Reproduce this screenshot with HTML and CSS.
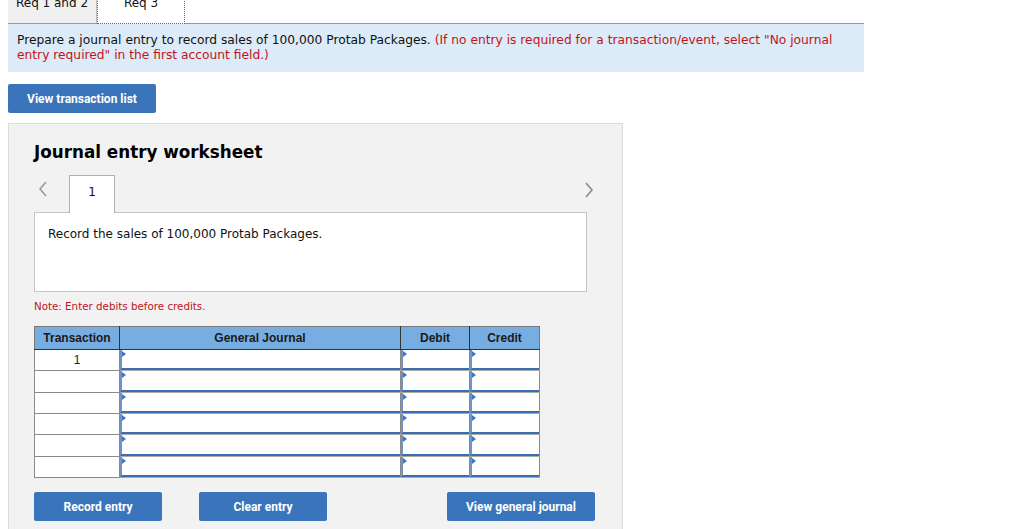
FILE: index.html
```html
<!DOCTYPE html>
<html>
<head>
<meta charset="utf-8">
<link rel="stylesheet" href="styles.css">
</head>
<body>
<div class="page">
  <div class="tabs">
    <div class="tab tab-off">Req 1 and 2</div>
    <div class="tab tab-on">Req 3</div>
  </div>
  <div class="info">Prepare a journal entry to record sales of 100,000 Protab Packages. <span class="red">(If no entry is required for a transaction/event, select "No journal entry required" in the first account field.)</span></div>
  <button class="btn btn-list">View transaction list</button>
  <div class="panel">
    <h2 class="title">Journal entry worksheet</h2>
    <div class="nav">
      <span class="arrow arrow-left">
        <svg width="10" height="16" viewBox="0 0 10 16"><path d="M8 1 L2 8 L8 15" fill="none" stroke="#9a9a9a" stroke-width="1.6"/></svg>
      </span>
      <div class="numtab">1</div>
      <span class="spacer"></span>
      <span class="arrow arrow-right">
        <svg width="10" height="16" viewBox="0 0 10 16"><path d="M2 1 L8 8 L2 15" fill="none" stroke="#8a8a8a" stroke-width="1.6"/></svg>
      </span>
    </div>
    <div class="desc">Record the sales of 100,000 Protab Packages.</div>
    <div class="note">Note: Enter debits before credits.</div>
    <table class="journal">
      <thead>
        <tr><th class="c-tr">Transaction</th><th class="c-gj">General Journal</th><th class="c-dr">Debit</th><th class="c-cr">Credit</th></tr>
      </thead>
      <tbody>
        <tr><td class="tr">1</td><td class="in"><div class="box"></div></td><td class="in"><div class="box"></div></td><td class="in"><div class="box"></div></td></tr>
        <tr class="tall"><td class="tr"></td><td class="in"><div class="box"></div></td><td class="in"><div class="box"></div></td><td class="in"><div class="box"></div></td></tr>
        <tr><td class="tr"></td><td class="in"><div class="box"></div></td><td class="in"><div class="box"></div></td><td class="in"><div class="box"></div></td></tr>
        <tr><td class="tr"></td><td class="in"><div class="box"></div></td><td class="in"><div class="box"></div></td><td class="in"><div class="box"></div></td></tr>
        <tr class="tall"><td class="tr"></td><td class="in"><div class="box"></div></td><td class="in"><div class="box"></div></td><td class="in"><div class="box"></div></td></tr>
        <tr><td class="tr"></td><td class="in"><div class="box"></div></td><td class="in"><div class="box"></div></td><td class="in"><div class="box"></div></td></tr>
      </tbody>
    </table>
    <div class="actions">
      <button class="btn btn-rec">Record entry</button>
      <button class="btn btn-clr">Clear entry</button>
      <span class="spacer"></span>
      <button class="btn btn-view">View general journal</button>
    </div>
  </div>
</div>
</body>
</html>
```
FILE: styles.css
```css
html, body { margin: 0; padding: 0; background: #fff; }
body { font-family: "DejaVu Sans", Verdana, sans-serif; color: #111; overflow: hidden; }
.page { padding-left: 8px; width: 856px; }

.tabs { display: flex; margin-top: -14px; height: 37px; border-bottom: 1px solid #9a9a9a; }
.tab { height: 37px; box-sizing: border-box; font-size: 12px; text-align: center; padding-top: 10px; }
.tab-off { background: #f0f0f0; border-right: 1px solid #bbb; width: 89px; }
.tab-on { background: #fff; border: 1px dotted #2f6fc6; border-top: none; width: 88px; height: 38px; margin-bottom: -1px; }

.info { background: #dcebf7; font-size: 12.25px; line-height: 15px; padding: 9px 9px 9px 9px; }
.red { color: #c0141b; }

.btn { border: none; background: #3a75bb; color: #fff; font-family: Roboto, "Liberation Sans", sans-serif; font-weight: bold; font-size: 12px; border-radius: 2px; height: 29px; padding: 0; cursor: pointer; }
.btn-list { width: 148px; margin-top: 12px; display: block; }

.panel { margin-top: 10px; width: 615px; box-sizing: border-box; background: #f2f2f2; border: 1px solid #dcdcdc; border-bottom: none; padding: 16px 0 8px 25px; height: 420px; }
.title { margin: 0; font-size: 16.8px; font-weight: bold; line-height: 24px; color: #000; }

.nav { display: flex; align-items: flex-start; margin-top: 11px; width: 560px; height: 37px; }
.arrow { display: block; height: 16px; }
.arrow-left { margin: 6px 0 0 4px; width: 10px; }
.arrow-right { margin: 7px 0 0 0; width: 10px; }
.spacer { flex: 1; }
.numtab { margin-left: 21px; width: 46px; height: 38px; box-sizing: border-box; background: #fff; border: 1px solid #b0b0b0; border-bottom: none; text-align: center; font-size: 12px; padding-top: 9px; position: relative; z-index: 1; }

.desc { width: 553px; height: 80px; box-sizing: border-box; background: #fff; border: 1px solid #c4c4c4; font-size: 12px; padding: 14px 13px; }
.note { color: #c0141b; font-size: 10.3px; margin-top: 7px; line-height: 14px; }

.journal { margin-top: 13px; border-collapse: collapse; font-family: "Liberation Sans", Arial, sans-serif; font-size: 12px; }
.journal th { background: #78ade2; height: 22px; border: 1px solid #333; border-top-color: #777; font-weight: bold; color: #1a1a1a; padding: 0; }
.journal th.c-tr { border-left-color: #777; }
.journal th.c-cr { border-right-color: #777; }
.c-tr { width: 84px; }
.c-gj { width: 280px; }
.c-dr { width: 68px; }
.c-cr { width: 69px; }
.journal td { height: 20px; padding: 0; border: 1px solid #8a8a8a; background: #fff; }
.journal tr.tall td { height: 21px; }
.journal td.tr { text-align: center; color: #222; }
.journal td.in { border-bottom-color: #a9a9a9; }
.box { border-left: 2px solid #6e93c4; border-bottom: 2px solid #3a6eb0; box-sizing: border-box; height: 20px; position: relative; }
.tall .box { height: 21px; }
.box::before { content: ""; position: absolute; left: 0; top: 1px; border-left: 4px solid #3a78c4; border-top: 3px solid transparent; border-bottom: 3px solid transparent; }

.actions { display: flex; margin-top: 14px; width: 561px; }
.btn-rec { width: 128px; }
.btn-clr { width: 128px; margin-left: 37px; }
.btn-view { width: 148px; }
```
